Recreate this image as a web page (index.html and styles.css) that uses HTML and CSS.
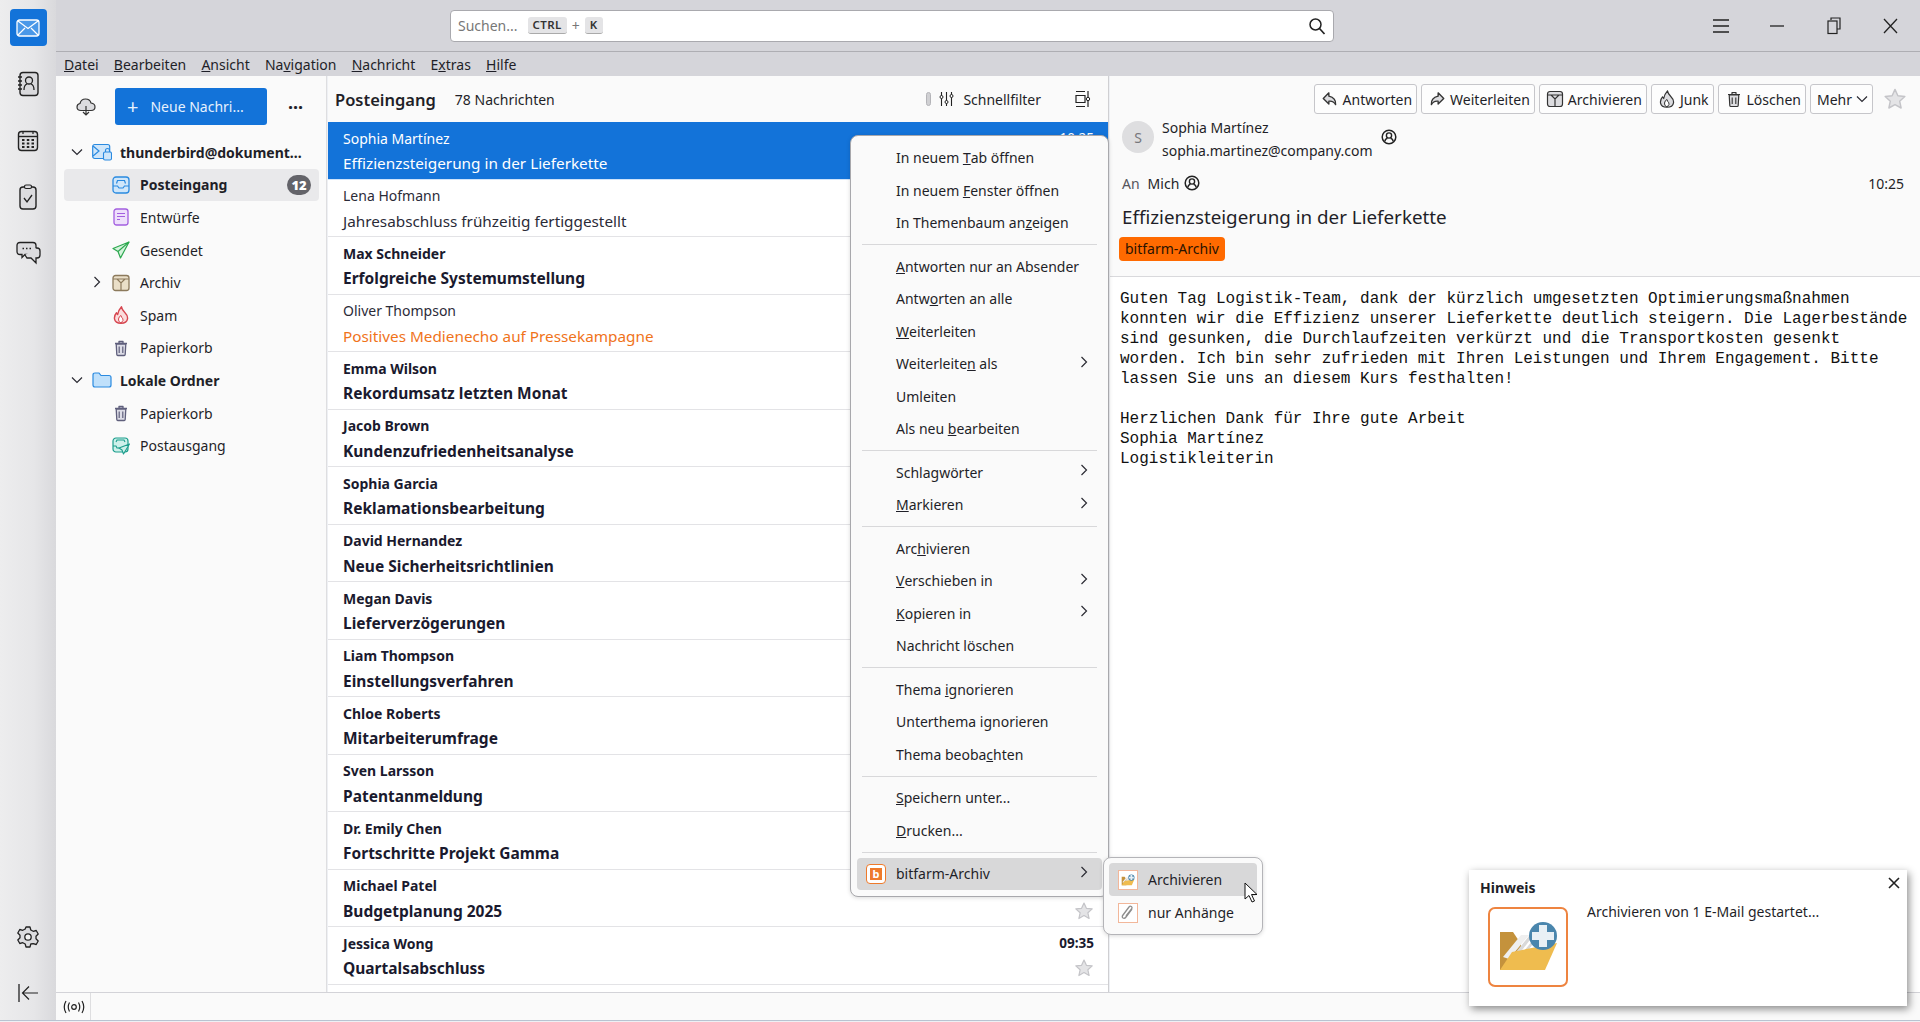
FILE: index.html
```html
<!DOCTYPE html>
<html lang="de">
<head>
  <meta charset="UTF-8">
  <title>Posteingang - Thunderbird</title>
  <link rel="stylesheet" href="styles.css">
</head>
<body>
  <!-- shared icons -->
  <svg class="sprite" xmlns="http://www.w3.org/2000/svg">
    <symbol id="i-star" viewBox="0 0 20 20"><path d="M10 2l2.4 5.300 5.800.6-4.300 3.900 1.200 5.700-5.100-2.900-5.100 2.900 1.200-5.700-4.300-3.900 5.800-.6z" fill="#e4e4e6" stroke="#c4c4c8" stroke-width="1.200" stroke-linejoin="round"/></symbol>
    <symbol id="i-trash" viewBox="0 0 18 18"><path d="M3 4.500h12M7 4V2.500h4V4M4.200 5l.6 10.500q.1 1 1 1h6.400q.9 0 1-1L13.800 5z" fill="#dcdce6" stroke="#5f5f7c" stroke-width="1.300" stroke-linejoin="round"/><path d="M7.200 7.500v6.500M10.800 7.500v6.500" stroke="#5f5f7c" stroke-width="1.200"/></symbol>
    <symbol id="i-contact" viewBox="0 0 16 16"><circle cx="8" cy="8" r="6.800" fill="none" stroke="#222" stroke-width="1.500"/><circle cx="8" cy="6.500" r="2.600" fill="none" stroke="#222" stroke-width="1.400"/><path d="M3.800 12.500q.5-3 2.700-3.300M12.200 12.500q-.5-3-2.700-3.300" fill="none" stroke="#222" stroke-width="1.400"/></symbol>
    <symbol id="i-chevron" viewBox="0 0 12 12"><path d="M3.500 1l5 5-5 5" fill="none" stroke="#2b2b33" stroke-width="1.200"/></symbol>
    <symbol id="i-twisty" viewBox="0 0 12 12"><path d="M1 3.500l5 5 5-5" fill="none" stroke="#2b2b33" stroke-width="1.200"/></symbol>
    <symbol id="i-archive" viewBox="0 0 18 18"><rect x="1" y="1.500" width="16" height="15" rx="2.500" fill="#eadfc8" stroke="#8c7a5c" stroke-width="1.300"/><path d="M1 5h16M5 5l4 4 4-4M9 9v7.500" fill="none" stroke="#8c7a5c" stroke-width="1.200"/></symbol>
    <symbol id="i-flame" viewBox="0 0 18 18"><path d="M9.500 .8q.5 3 3.300 5.700 3.200 3.200 2.700 6.300-.7 4.400-6.500 4.400t-6.500-4.400q-.4-3.300 2-6l1.200 1.700q.8-4.500 3.800-7.700z" fill="#fbdcdc" stroke="#d6454f" stroke-width="1.400" stroke-linejoin="round"/><path d="M9 17q-3-1.200-2.500-4t2.500-3.500q.5 2 1.800 3.300t-1.800 4.200z" fill="#fff" stroke="#d6454f" stroke-width="1"/></symbol>
    <symbol id="i-archfolder" viewBox="0 0 80 80"><path d="M12 63V25h13l8 12v26z" fill="#c4923c"/><path d="M15 50l18-22h8L21 52z" fill="#efefef"/><path d="M24 50l17-21h4L28 51zM32 49l16-20h3L35 50z" fill="#d9d9d9"/><path d="M12 63l12-18 45-9-12 27z" fill="#efbc4f"/><circle cx="55" cy="29" r="14" fill="#4a86ad"/><path d="M51 18h8v7h7v8h-7v7h-8v-7h-7v-8h7z" fill="#e8f0f5"/></symbol>
  </svg>

  <div class="app">
    <nav class="spaces">
      <div class="spaces-top">
        <button class="space-btn active">
          <svg width="24" height="18" viewBox="0 0 24 18"><rect x="1" y="1" width="22" height="16" rx="2.500" fill="#4a98e8" stroke="#fff" stroke-width="1.300"/><path d="M2 2l10 7.500L22 2M2 16l7-7M22 16l-7-7" fill="none" stroke="#fff" stroke-width="1.200"/></svg>
        </button>
        <button class="space-btn">
          <svg width="22" height="26" viewBox="0 0 22 26"><rect x="3" y="1.500" width="18" height="23" rx="3" fill="#d9d9dc" stroke="#222" stroke-width="1.400"/><path d="M1 6h4M1 10h4M1 14h4M1 18h4" stroke="#222" stroke-width="1.300"/><circle cx="12" cy="9.500" r="3.500" fill="none" stroke="#222" stroke-width="1.300"/><path d="M7 19q0-5 3-6M17 19q0-5-3-6" fill="none" stroke="#222" stroke-width="1.300"/></svg>
        </button>
        <button class="space-btn">
          <svg width="22" height="22" viewBox="0 0 22 22"><rect x="1.500" y="1.500" width="19" height="19" rx="3" fill="#dcdcdf" stroke="#222" stroke-width="1.400"/><path d="M1.500 6.500h19" stroke="#222" stroke-width="1.400"/><path d="M6 1v3M16 1v3" stroke="#222" stroke-width="1.200"/><path d="M5 10h2.500M9.800 10h2.500M14.500 10h2.500M5 13.500h2.500M9.800 13.500h2.500M14.500 13.500h2.500M5 17h2.500M9.800 17h2.500M14.500 17h2.500" stroke="#222" stroke-width="2"/></svg>
        </button>
        <button class="space-btn">
          <svg width="20" height="26" viewBox="0 0 20 26"><rect x="2" y="3" width="16" height="22" rx="3" fill="#dcdcdf" stroke="#222" stroke-width="1.400"/><rect x="6.500" y="1" width="7" height="3.500" rx="1.500" fill="#dcdcdf" stroke="#222" stroke-width="1.200"/><path d="M6 14l3 4 5-7" fill="none" stroke="#222" stroke-width="1.300"/></svg>
        </button>
        <button class="space-btn chat-btn">
          <svg width="25" height="24" viewBox="0 0 25 24"><path d="M4 1.500h13q3 0 3 3v6q0 3-3 3H9l-3 3v-3H4q-3 0-3-3v-6q0-3 3-3z" fill="#dcdcdf" stroke="#222" stroke-width="1.300"/><path d="M20 7h1q3 0 3 3v4q0 3-3 3h-1v5l-5-5h-4l-2-3" fill="#dcdcdf" stroke="#222" stroke-width="1.300"/><path d="M6.500 7.500h1.500M10 7.500h1.500M13.500 7.500H15" stroke="#222" stroke-width="1.500"/></svg>
        </button>
      </div>
      <div class="spaces-bottom">
        <button class="space-btn">
          <svg width="24" height="24" viewBox="0 0 24 24"><path d="M10 2h4l.8 3 2.400 1.300 3-.8 2 3.500-2.200 2.200v2.600l2.200 2.200-2 3.500-3-.8L14.800 19 14 22h-4l-.8-3-2.400-1.300-3 .8-2-3.500L4 12.800v-2.600L1.800 8l2-3.500 3 .8L9.200 4z" fill="#dcdcdf" stroke="#222" stroke-width="1.300" stroke-linejoin="round"/><circle cx="12" cy="12" r="3.200" fill="#f4f4f4" stroke="#222" stroke-width="1.300"/></svg>
        </button>
        <button class="space-btn">
          <svg width="22" height="20" viewBox="0 0 22 20"><path d="M2 1v18" stroke="#222" stroke-width="1.300"/><path d="M21 10H6M12 3.500L5.500 10l6.500 6.500" fill="none" stroke="#222" stroke-width="1.200"/></svg>
        </button>
      </div>
    </nav>

    <div class="main">
      <header class="topbar">
        <div class="search">
          <span class="search-hint">Suchen...</span>
          <kbd>CTRL</kbd><span class="plus">+</span><kbd>K</kbd>
          <svg class="search-icon" width="18" height="18" viewBox="0 0 18 18"><circle cx="7.500" cy="7.500" r="5.500" fill="none" stroke="#222" stroke-width="1.500"/><path d="M11.500 11.500l5 5.500" stroke="#222" stroke-width="1.700"/></svg>
        </div>
        <div class="window-controls">
          <button><svg width="16" height="14" viewBox="0 0 16 14"><path d="M0 1h16M0 7h16M0 13h16" stroke="#222" stroke-width="1.300"/></svg></button>
          <button><svg width="14" height="2" viewBox="0 0 14 2"><path d="M0 1h14" stroke="#222" stroke-width="1.300"/></svg></button>
          <button><svg width="14" height="18" viewBox="0 0 14 18"><path d="M4 3V1h9v11h-3" fill="none" stroke="#222" stroke-width="1.200"/><rect x="1" y="4" width="9" height="12.500" fill="none" stroke="#222" stroke-width="1.200"/></svg></button>
          <button><svg width="15" height="18" viewBox="0 0 15 18"><path d="M1 2l13 14M14 2L1 16" stroke="#222" stroke-width="1.300"/></svg></button>
        </div>
      </header>

      <div class="menubar">
        <span><u>D</u>atei</span>
        <span><u>B</u>earbeiten</span>
        <span><u>A</u>nsicht</span>
        <span>Na<u>v</u>igation</span>
        <span><u>N</u>achricht</span>
        <span>E<u>x</u>tras</span>
        <span><u>H</u>ilfe</span>
      </div>

      <div class="panes">
        <aside class="folders">
          <div class="folders-head">
            <svg class="get-mail" width="20" height="20" viewBox="0 0 20 20"><path d="M5 13.500q-4 0-4-3.500 0-3 3-3.500Q5 2 9.500 2t5.500 4q4 .5 4 4 0 3.500-4 3.500z" fill="#dcdcdf" stroke="#333" stroke-width="1.200"/><path d="M10 9v9M7 15l3 3 3-3" fill="none" stroke="#333" stroke-width="1.200"/></svg>
            <button class="compose"><span class="compose-plus">+</span>Neue Nachri...</button>
            <span class="more-dots">···</span>
          </div>
          <ul class="folder-tree">
            <li class="account">
              <svg class="twisty" width="12" height="12"><use href="#i-twisty"/></svg>
              <svg class="folder-icon" width="20" height="18" viewBox="0 0 20 18"><rect x=".7" y="1.500" width="17" height="14" rx="2" fill="#cfe6fa" stroke="#2a8ae0" stroke-width="1.200"/><path d="M1 3l6 5-6 5" fill="none" stroke="#2a8ae0" stroke-width="1.200"/><rect x="11.500" y="9" width="8" height="8" rx="1.500" fill="#cfe6fa" stroke="#2a8ae0" stroke-width="1.100"/><path d="M13.500 9V7.500a2 2 0 0 1 4 0V9" fill="none" stroke="#2a8ae0" stroke-width="1.100"/></svg>
              <span>thunderbird@dokument...</span>
            </li>
            <li class="folder selected">
              <svg class="folder-icon" width="18" height="18" viewBox="0 0 18 18"><rect x="1" y="1" width="16" height="16" rx="3" fill="#cfe6fa" stroke="#2a8ae0" stroke-width="1.300"/><path d="M1 10h4.500l1.500 2h4l1.500-2H17M4.500 7.500l1-3h7l1 3" fill="none" stroke="#2a8ae0" stroke-width="1.200"/></svg>
              <span>Posteingang</span>
              <b class="badge">12</b>
            </li>
            <li class="folder">
              <svg class="folder-icon" width="18" height="18" viewBox="0 0 18 18"><rect x="2" y="1" width="14" height="16" rx="2.500" fill="#eee0fb" stroke="#a35fe0" stroke-width="1.300"/><path d="M5 5.500h8M5 8.500h8M5 11.500h3" stroke="#a35fe0" stroke-width="1.200"/></svg>
              <span>Entwürfe</span>
            </li>
            <li class="folder">
              <svg class="folder-icon" width="18" height="18" viewBox="0 0 18 18"><path d="M17 1L1 7.500l5 3 2.500 6.500z" fill="#d5f3dd" stroke="#2da84f" stroke-width="1.200" stroke-linejoin="round"/><path d="M6 10.500L17 1" stroke="#2da84f" stroke-width="1.100"/></svg>
              <span>Gesendet</span>
            </li>
            <li class="folder">
              <svg class="twisty sub" width="12" height="12"><use href="#i-chevron"/></svg>
              <svg class="folder-icon" width="18" height="18"><use href="#i-archive"/></svg>
              <span>Archiv</span>
            </li>
            <li class="folder">
              <svg class="folder-icon" width="18" height="18"><use href="#i-flame"/></svg>
              <span>Spam</span>
            </li>
            <li class="folder">
              <svg class="folder-icon" width="18" height="18"><use href="#i-trash"/></svg>
              <span>Papierkorb</span>
            </li>
            <li class="account">
              <svg class="twisty" width="12" height="12"><use href="#i-twisty"/></svg>
              <svg class="folder-icon" width="20" height="16" viewBox="0 0 20 16"><path d="M1 3q0-2 2-2h4l2 2.500h8q2 0 2 2V13q0 2-2 2H3q-2 0-2-2z" fill="#bfe0fb" stroke="#2a8ae0" stroke-width="1.200"/></svg>
              <span>Lokale Ordner</span>
            </li>
            <li class="folder">
              <svg class="folder-icon" width="18" height="18"><use href="#i-trash"/></svg>
              <span>Papierkorb</span>
            </li>
            <li class="folder">
              <svg class="folder-icon" width="18" height="18" viewBox="0 0 18 18"><rect x="1" y="1" width="15" height="14" rx="3" fill="#cdf0ea" stroke="#1b9d8c" stroke-width="1.200"/><path d="M1 9h3l1 2h2M4 5l1-2h7l1 2" fill="none" stroke="#1b9d8c" stroke-width="1.100"/><path d="M17.500 7L7 11l3 2 1.500 4z" fill="#cdf0ea" stroke="#1b9d8c" stroke-width="1.100" stroke-linejoin="round"/></svg>
              <span>Postausgang</span>
            </li>
          </ul>
        </aside>

        <section class="list">
          <div class="list-head">
            <h2>Posteingang</h2>
            <span class="list-count">78 Nachrichten</span>
            <span class="filter-grip"></span>
            <svg class="filter-icon" width="15" height="16" viewBox="0 0 15 16"><path d="M2.500 1v14M7.500 1v14M12.500 1v14" stroke="#222" stroke-width="1.100"/><circle cx="2.500" cy="6" r="1.500" fill="#fafafa" stroke="#222"/><circle cx="7.500" cy="11" r="1.500" fill="#fafafa" stroke="#222"/><circle cx="12.500" cy="5" r="1.500" fill="#fafafa" stroke="#222"/></svg>
            <span class="filter-label">Schnellfilter</span>
            <svg class="layout-icon" width="16" height="18" viewBox="0 0 16 18"><path d="M1 1.500h9M1 16.500h9M1 5.500h9v7H1zM13 1v16" fill="none" stroke="#222" stroke-width="1.200"/><circle cx="13" cy="9" r="1.700" fill="#fafafa" stroke="#222"/></svg>
          </div>
          <ul class="rows">
            <li class="row current"><div class="row-top"><span>Sophia Martínez</span><time>10:25</time></div><div class="row-bottom"><span>Effizienzsteigerung in der Lieferkette</span></div></li>
            <li class="row"><div class="row-top"><span>Lena Hofmann</span></div><div class="row-bottom"><span>Jahresabschluss frühzeitig fertiggestellt</span></div></li>
            <li class="row unread"><div class="row-top"><span>Max Schneider</span></div><div class="row-bottom"><span>Erfolgreiche Systemumstellung</span></div></li>
            <li class="row tagged"><div class="row-top"><span>Oliver Thompson</span></div><div class="row-bottom"><span>Positives Medienecho auf Pressekampagne</span></div></li>
            <li class="row unread"><div class="row-top"><span>Emma Wilson</span></div><div class="row-bottom"><span>Rekordumsatz letzten Monat</span></div></li>
            <li class="row unread"><div class="row-top"><span>Jacob Brown</span></div><div class="row-bottom"><span>Kundenzufriedenheitsanalyse</span></div></li>
            <li class="row unread"><div class="row-top"><span>Sophia Garcia</span></div><div class="row-bottom"><span>Reklamationsbearbeitung</span></div></li>
            <li class="row unread"><div class="row-top"><span>David Hernandez</span></div><div class="row-bottom"><span>Neue Sicherheitsrichtlinien</span></div></li>
            <li class="row unread"><div class="row-top"><span>Megan Davis</span></div><div class="row-bottom"><span>Lieferverzögerungen</span></div></li>
            <li class="row unread"><div class="row-top"><span>Liam Thompson</span></div><div class="row-bottom"><span>Einstellungsverfahren</span></div></li>
            <li class="row unread"><div class="row-top"><span>Chloe Roberts</span></div><div class="row-bottom"><span>Mitarbeiterumfrage</span></div></li>
            <li class="row unread"><div class="row-top"><span>Sven Larsson</span></div><div class="row-bottom"><span>Patentanmeldung</span></div></li>
            <li class="row unread"><div class="row-top"><span>Dr. Emily Chen</span></div><div class="row-bottom"><span>Fortschritte Projekt Gamma</span></div></li>
            <li class="row unread"><div class="row-top"><span>Michael Patel</span></div><div class="row-bottom"><span>Budgetplanung 2025</span><svg class="star" width="20" height="20"><use href="#i-star"/></svg></div></li>
            <li class="row unread"><div class="row-top"><span>Jessica Wong</span><time>09:35</time></div><div class="row-bottom"><span>Quartalsabschluss</span><svg class="star" width="20" height="20"><use href="#i-star"/></svg></div></li>
          </ul>
        </section>

        <section class="message">
          <div class="msg-head">
            <div class="msg-toolbar">
              <button class="msg-btn"><svg width="18" height="18" viewBox="0 0 16 16"><path d="M7 2.500L2 7.500l5 5V10q4-.5 6 3 .5-6-6-7.500z" fill="#dcdcdf" stroke="#333" stroke-width="1.200" stroke-linejoin="round"/></svg>Antworten</button>
              <button class="msg-btn"><svg width="18" height="18" viewBox="0 0 16 16"><path d="M9 2.500l5 5-5 5V10q-4-.5-6 3-.5-6 6-7.500z" fill="#dcdcdf" stroke="#333" stroke-width="1.200" stroke-linejoin="round"/></svg>Weiterleiten</button>
              <button class="msg-btn"><svg width="18" height="18" viewBox="0 0 18 18"><rect x="1.500" y="1.500" width="15" height="15" rx="2.500" fill="#dcdcdf" stroke="#333" stroke-width="1.200"/><path d="M1.500 5h15M5 5l4 4 4-4M9 9v7.500" fill="none" stroke="#333" stroke-width="1.200"/></svg>Archivieren</button>
              <button class="msg-btn"><svg width="18" height="18" viewBox="0 0 18 18"><path d="M9.500 .8q.5 3 3.300 5.700 3.200 3.200 2.700 6.300-.7 4.400-6.500 4.400t-6.500-4.400q-.4-3.300 2-6l1.200 1.700q.8-4.500 3.800-7.700z" fill="#dcdcdf" stroke="#333" stroke-width="1.200" stroke-linejoin="round"/><path d="M9 17q-3-1.200-2.500-4t2.500-3.500q.5 2 1.800 3.300t-1.800 4.200z" fill="#fff" stroke="#333"/></svg>Junk</button>
              <button class="msg-btn"><svg width="18" height="18" viewBox="0 0 18 18"><path d="M3 4.500h12M7 4V2.500h4V4M4.200 5l.6 10.500q.1 1 1 1h6.400q.9 0 1-1L13.800 5z" fill="#dcdcdf" stroke="#333" stroke-width="1.200" stroke-linejoin="round"/><path d="M7.200 7.500v6.500M10.800 7.500v6.500" stroke="#333" stroke-width="1.100"/></svg>Löschen</button>
              <button class="msg-btn">Mehr<svg class="more-arrow" width="12" height="12"><use href="#i-twisty"/></svg></button>
              <svg class="msg-star" width="24" height="24"><use href="#i-star"/></svg>
            </div>
            <div class="sender">
              <span class="avatar">S</span>
              <div class="sender-text">
                <span class="sender-name">Sophia Martínez</span>
                <span class="sender-mail">sophia.martinez@company.com</span>
              </div>
              <svg class="contact" width="16" height="16"><use href="#i-contact"/></svg>
            </div>
            <div class="recipients">
              <span class="to-label">An</span>
              <span>Mich</span>
              <svg width="16" height="16"><use href="#i-contact"/></svg>
              <time>10:25</time>
            </div>
            <h1 class="subject">Effizienzsteigerung in der Lieferkette</h1>
            <span class="tag">bitfarm-Archiv</span>
          </div>
          <pre class="msg-body">Guten Tag Logistik-Team, dank der kürzlich umgesetzten Optimierungsmaßnahmen
konnten wir die Effizienz unserer Lieferkette deutlich steigern. Die Lagerbestände
sind gesunken, die Durchlaufzeiten verkürzt und die Transportkosten gesenkt
worden. Ich bin sehr zufrieden mit Ihren Leistungen und Ihrem Engagement. Bitte
lassen Sie uns an diesem Kurs festhalten!

Herzlichen Dank für Ihre gute Arbeit
Sophia Martínez
Logistikleiterin</pre>
        </section>
      </div>

      <footer class="statusbar">
        <span class="status-online">
          <svg width="22" height="14" viewBox="0 0 22 14"><circle cx="11" cy="7" r="2.300" fill="none" stroke="#222" stroke-width="1.200"/><path d="M6.500 2.500q-2.500 4.500 0 9M15.500 2.500q2.500 4.500 0 9M3 1q-3.500 6 0 12M19 1q3.500 6 0 12" fill="none" stroke="#222" stroke-width="1.200"/></svg>
        </span>
      </footer>
    </div>
  </div>

  <!-- context menu -->
  <div class="context-menu">
    <div class="item">In neuem <u>T</u>ab öffnen</div>
    <div class="item">In neuem <u>F</u>enster öffnen</div>
    <div class="item">In Themenbaum an<u>z</u>eigen</div>
    <hr>
    <div class="item"><u>A</u>ntworten nur an Absender</div>
    <div class="item">Antw<u>o</u>rten an alle</div>
    <div class="item"><u>W</u>eiterleiten</div>
    <div class="item has-sub">Weiterleite<u>n</u> als<svg width="12" height="12"><use href="#i-chevron"/></svg></div>
    <div class="item">Umleiten</div>
    <div class="item">Als neu <u>b</u>earbeiten</div>
    <hr>
    <div class="item has-sub">Schlagwörter<svg width="12" height="12"><use href="#i-chevron"/></svg></div>
    <div class="item has-sub"><u>M</u>arkieren<svg width="12" height="12"><use href="#i-chevron"/></svg></div>
    <hr>
    <div class="item">Arc<u>h</u>ivieren</div>
    <div class="item has-sub"><u>V</u>erschieben in<svg width="12" height="12"><use href="#i-chevron"/></svg></div>
    <div class="item has-sub"><u>K</u>opieren in<svg width="12" height="12"><use href="#i-chevron"/></svg></div>
    <div class="item">Nachricht löschen</div>
    <hr>
    <div class="item">Thema <u>i</u>gnorieren</div>
    <div class="item">Unterthema ignorieren</div>
    <div class="item">Thema beoba<u>c</u>hten</div>
    <hr>
    <div class="item"><u>S</u>peichern unter...</div>
    <div class="item"><u>D</u>rucken...</div>
    <hr>
    <div class="item has-sub hover"><span class="bitfarm"><span>b</span></span>bitfarm-Archiv<svg width="12" height="12"><use href="#i-chevron"/></svg></div>
  </div>

  <div class="sub-menu">
    <div class="sub-item hover">
      <span class="sub-icon"><svg width="18" height="18"><use href="#i-archfolder"/></svg></span>Archivieren
    </div>
    <div class="sub-item">
      <span class="sub-icon"><svg width="14" height="16" viewBox="0 0 14 16"><path d="M11 4L5 12q-1.500 2-3 1t0-3l6-8q1-1.300 2.300-.5t.2 2.500L5 11" fill="none" stroke="#8d8d8d" stroke-width="1.300"/></svg></span>nur Anhänge
    </div>
  </div>

  <svg class="cursor" width="14" height="21" viewBox="0 0 14 21"><path d="M1 1v16l4-3.500 3 6.500 2.500-1-3-6.500H13z" fill="#fff" stroke="#111" stroke-width="1"/></svg>

  <!-- archive notification -->
  <div class="notice">
    <div class="notice-title">Hinweis</div>
    <svg class="notice-close" width="12" height="12" viewBox="0 0 12 12"><path d="M1 1l10 10M11 1L1 11" stroke="#222" stroke-width="1.600"/></svg>
    <div class="notice-body">
      <span class="notice-icon"><svg width="76" height="76" viewBox="2 2 76 76"><use href="#i-archfolder" width="80" height="80"/></svg></span>
      <span class="notice-text">Archivieren von 1 E-Mail gestartet...</span>
    </div>
  </div>
</body>
</html>
```

FILE: styles.css
```css
* {
  box-sizing: border-box;
}
html, body {
  margin: 0;
  padding: 0;
  height: 1022px;
  overflow: hidden;
}
body {
  font-family: "Noto Sans", "Open Sans", sans-serif;
  font-size: 14px;
  color: #1f1f28;
  background-color: #eef0f4;
}
ul {
  list-style: none;
  margin: 0;
  padding: 0;
}
button {
  font: inherit;
  color: inherit;
  background: none;
  border: none;
  padding: 0;
}
.sprite {
  display: none;
}
.app {
  display: flex;
  height: 1021px;
  border-bottom: 1px solid #b9c3d1;
}

/* spaces toolbar */
.spaces {
  width: 56px;
  flex-shrink: 0;
  display: flex;
  flex-direction: column;
  justify-content: space-between;
  padding: 9px 0 10px;
  background: linear-gradient(to right, #ededee 0%, #e6e6e8 60%, #d9d9dc 100%);
}
.spaces-top, .spaces-bottom {
  display: flex;
  flex-direction: column;
  align-items: center;
}
.spaces-top {
  gap: 19.500px;
}
.spaces-bottom {
  gap: 19px;
  margin-bottom: -1px;
}
.space-btn {
  width: 37px;
  height: 37px;
  display: flex;
  align-items: center;
  justify-content: center;
  border-radius: 4px;
}
.space-btn.active {
  background-color: #1373d9;
}
.chat-btn {
  margin-top: -1px;
}

/* main column */
.main {
  flex: 1;
  min-width: 0;
  display: flex;
  flex-direction: column;
}
.topbar {
  height: 52px;
  flex-shrink: 0;
  display: flex;
  align-items: center;
  justify-content: space-between;
  padding-left: 394px;
  padding-right: 1px;
  background-color: #d5d5da;
  border-bottom: 1px solid #aeaeb3;
}
.search {
  width: 884px;
  height: 32px;
  display: flex;
  align-items: center;
  padding: 0 7px;
  background-color: #fff;
  border: 1px solid #a9a9ae;
  border-radius: 4px;
  color: #777;
}
.search-hint {
  margin-right: 10px;
}
.search kbd {
  height: 17px;
  font-family: inherit;
  font-size: 11.500px;
  font-weight: 600;
  line-height: 15px;
  padding: 0 5px;
  letter-spacing: 0.4px;
  color: #333;
  background-color: #e4e4e6;
  border-radius: 3px;
  border-bottom: 1px solid #aaa;
}
.plus {
  margin: 0 5px;
  color: #777;
}
.search-icon {
  margin-left: auto;
}
.window-controls {
  display: flex;
}
.window-controls button {
  width: 56.670px;
  height: 40px;
  display: flex;
  align-items: center;
  justify-content: center;
}
.menubar {
  height: 24px;
  flex-shrink: 0;
  display: flex;
  align-items: center;
  gap: 15.200px;
  padding-left: 8px;
  background-color: #d5d5da;
}

.panes {
  flex: 1;
  min-height: 0;
  display: flex;
}

/* folder pane */
.folders {
  width: 271px;
  flex-shrink: 0;
  background-color: #fafafa;
  border-right: 1px solid #dedee0;
}
.folders-head {
  display: flex;
  align-items: center;
  height: 37px;
  margin-top: 12px;
  padding-left: 20px;
}
.compose {
  width: 152px;
  height: 37px;
  margin-left: 19px;
  display: flex;
  align-items: center;
  padding-left: 12px;
  color: #e6f1fd;
  background-color: #1373d9;
  border-radius: 3px;
}
.compose-plus {
  font-size: 20px;
  line-height: 20px;
  margin-right: 12px;
}
.more-dots {
  margin-left: 21px;
  font-size: 18px;
  font-weight: 700;
}
.folder-tree {
  margin-top: 11px;
}
.folder-tree li {
  position: relative;
  height: 32.600px;
  display: flex;
  align-items: center;
}
.account {
  padding-left: 36px;
  font-weight: 700;
}
.folder {
  padding-left: 48px;
  margin: 0 7px 0 8px;
  border-radius: 4px;
}
.folder.selected {
  background-color: #e9e9eb;
  font-weight: 700;
}
.folder-icon {
  flex-shrink: 0;
  margin-right: 10px;
}
.account .folder-icon {
  margin-right: 8px;
}
.twisty {
  position: absolute;
  left: 15px;
  top: 10px;
}
.twisty.sub {
  left: 27px;
}
.badge {
  margin-left: auto;
  margin-right: 8px;
  min-width: 24px;
  height: 20px;
  line-height: 20px;
  text-align: center;
  font-size: 13px;
  color: #fff;
  background-color: #636369;
  border-radius: 10px;
}

/* message list */
.list {
  width: 781px;
  margin-left: 1px;
  flex-shrink: 0;
  display: flex;
  flex-direction: column;
  background-color: #fff;
  border-right: 1px solid #cfcfd2;
}
.list-head {
  height: 46px;
  flex-shrink: 0;
  display: flex;
  align-items: center;
  padding: 0 17px 0 7px;
  background-color: #fafafa;
}
.list-head h2 {
  margin: 0;
  font-size: 16.500px;
  font-weight: 600;
}
.list-count {
  margin-left: 19px;
}
.filter-grip {
  width: 5px;
  height: 14px;
  margin-left: auto;
  background-color: #d0d0d3;
  border: 1px solid #b4b4b8;
  border-radius: 3px;
}
.filter-icon {
  margin-left: 8px;
}
.filter-label {
  margin-left: 9px;
  margin-right: 34px;
}
.rows {
  flex: 1;
  min-height: 0;
  overflow: hidden;
}
.row {
  height: 57.500px;
  padding: 6px 14px 0 15px;
  border-bottom: 1px solid #e3e3e6;
  color: #2b2b38;
}
.row-top {
  height: 20px;
  display: flex;
  justify-content: space-between;
  align-items: center;
}
.row-bottom {
  height: 24px;
  margin-top: 3px;
  display: flex;
  justify-content: space-between;
  align-items: center;
  font-size: 15.300px;
}
.row-top time {
  font-size: 13.500px;
}
.star {
  flex-shrink: 0;
}
.row.unread {
  font-weight: 700;
  color: #1a1a2e;
}
.row.unread .row-bottom {
  font-size: 15.500px;
}
.row.tagged .row-bottom span {
  color: #f0731a;
}
.row.current {
  color: #fff;
  background-color: #1373d9;
  border-bottom-color: #cfe3fa;
}

/* message pane */
.message {
  flex: 1;
  min-width: 0;
  margin-left: 1px;
  background-color: #fff;
}
.msg-head {
  padding: 8px 13px 15px 12px;
  background-color: #fafafa;
  border-bottom: 1px solid #d9d9dc;
}
.msg-toolbar {
  height: 30px;
  display: flex;
  justify-content: flex-end;
  align-items: center;
  gap: 4px;
}
.msg-btn {
  height: 30px;
  display: flex;
  align-items: center;
  gap: 4px;
  padding: 0 4px 0 6px;
  background-color: #fdfdfd;
  border: 1px solid #c6c6ca;
  border-radius: 3px;
}
.msg-star {
  margin-left: 6px;
}
.sender {
  display: flex;
  margin-top: 4px;
}
.avatar {
  width: 32px;
  height: 32px;
  margin-top: 3px;
  display: flex;
  align-items: center;
  justify-content: center;
  color: #77777c;
  background-color: #dedee0;
  border-radius: 50%;
}
.sender-text {
  display: flex;
  flex-direction: column;
  gap: 3px;
  margin-left: 8px;
  line-height: 20px;
}
.contact {
  margin: 11px 0 0 8px;
}
.recipients {
  height: 20px;
  margin-top: 12px;
  display: flex;
  align-items: center;
  gap: 8px;
}
.to-label {
  color: #55555c;
}
.recipients svg {
  margin-left: -3px;
}
.recipients time {
  margin-left: auto;
  margin-right: 3px;
}
.subject {
  height: 28px;
  margin: 10px 0 1px;
  font-size: 18.800px;
  line-height: 28px;
  font-weight: 400;
}
.tag {
  display: inline-block;
  height: 24px;
  margin: 5px 0 0 -3px;
  padding: 0 6px;
  line-height: 24px;
  color: #2a1300;
  background-color: #ff6a00;
  border-radius: 4px;
}
.msg-body {
  margin: 0;
  padding: 12px 0 0 10px;
  font-family: "Liberation Mono", monospace;
  font-size: 16px;
  line-height: 20px;
  color: #111;
}

/* status bar */
.statusbar {
  height: 28px;
  flex-shrink: 0;
  display: flex;
  background-color: #fafafa;
  border-top: 1px solid #d3d3d8;
}
.status-online {
  width: 35px;
  padding-left: 2px;
  display: flex;
  align-items: center;
  justify-content: center;
  border-right: 1px solid #dedee0;
}

/* popups */
.context-menu {
  position: absolute;
  left: 850px;
  top: 135px;
  width: 259px;
  padding: 5.500px 6px;
  background-color: #fafafa;
  border: 1px solid #a8a8ac;
  border-radius: 8px;
  box-shadow: 0 1px 4px rgba(0, 0, 0, 0.15);
}
.context-menu hr {
  height: 1px;
  margin: 5px 5px;
  border: none;
  background-color: #d8d8da;
}
.item {
  height: 32.500px;
  display: flex;
  align-items: center;
  padding-left: 39px;
  border-radius: 4px;
  white-space: pre;
}
.item.has-sub svg {
  margin-left: auto;
  margin-right: 12px;
  margin-top: -4px;
}
.item.hover, .sub-item.hover {
  background-color: #d8d8d9;
}
.item.hover {
  padding-left: 9px;
}
.bitfarm {
  width: 20px;
  height: 20px;
  display: flex;
  align-items: center;
  justify-content: center;
  margin-right: 10px;
  background-color: #fff;
  border: 1.500px solid #ee7a2c;
  border-radius: 4px;
}
.bitfarm span {
  width: 12px;
  height: 12px;
  font-size: 11px;
  line-height: 12px;
  font-weight: 700;
  text-align: center;
  color: #fff;
  background-color: #ee7a2c;
}
.sub-menu {
  position: absolute;
  left: 1103px;
  top: 857px;
  width: 160px;
  padding: 5px;
  background-color: #fafafa;
  border: 1px solid #b4b4b8;
  border-radius: 8px;
  box-shadow: 0 1px 4px rgba(0, 0, 0, 0.15);
}
.sub-item {
  height: 33px;
  display: flex;
  align-items: center;
  padding-left: 9px;
  border-radius: 4px;
}
.sub-icon {
  width: 20px;
  height: 20px;
  margin-right: 10px;
  display: flex;
  align-items: center;
  justify-content: center;
  background-color: #fff;
  border: 1px solid #f2b79a;
}
.cursor {
  position: absolute;
  left: 1244px;
  top: 882px;
}
.notice {
  position: absolute;
  left: 1469px;
  top: 870px;
  width: 438px;
  height: 136px;
  padding: 8px 11px;
  background-color: #fff;
  box-shadow: 2px 3px 8px rgba(0, 0, 0, 0.45);
}
.notice-title {
  font-weight: 700;
  line-height: 20px;
}
.notice-close {
  position: absolute;
  right: 7px;
  top: 7px;
}
.notice-body {
  display: flex;
  margin-top: 9px;
  padding-left: 8px;
}
.notice-icon {
  width: 80px;
  height: 80px;
  flex-shrink: 0;
  display: flex;
  border: 2px solid #ee8440;
  border-radius: 7px;
}
.notice-text {
  margin-left: 19px;
  line-height: 20px;
  margin-top: -5px;
}
```
